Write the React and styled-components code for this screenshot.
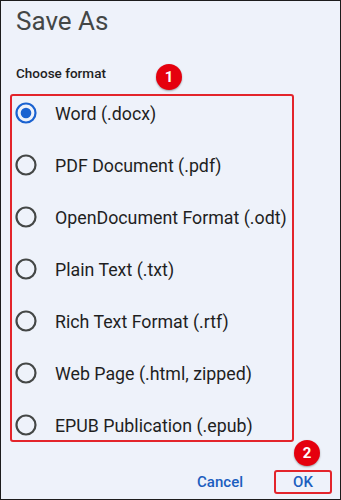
import React, { useState } from 'react'
import styled, { createGlobalStyle } from 'styled-components'

const GlobalStyle = createGlobalStyle`
  html, body {
    margin: 0;
    padding: 0;
    background: #eef2fa;
  }
  body {
    font-family: Roboto, "Liberation Sans", Arial, sans-serif;
  }
`

const Dialog = styled.div`
  position: relative;
  box-sizing: border-box;
  width: 341px;
  height: 500px;
  border: 1px solid #1c1c1c;
  background: #eef2fa;
  padding: 5px 8px 0 9px;
  display: flex;
  flex-direction: column;
`

const Title = styled.h1`
  margin: 0 0 0 6px;
  font-size: 26px;
  line-height: 30px;
  font-weight: 400;
  color: #444746;
`

const Label = styled.div`
  margin: 29px 0 0 6px;
  font-size: 13.5px;
  line-height: 16px;
  font-weight: 500;
  color: #1f1f1f;
`

const Highlight = styled.div`
  box-sizing: border-box;
  width: 284px;
  margin-top: 13px;
  border: 2px solid #e3242b;
  border-radius: 3px;
  padding: 2px 0 0 3px;
  display: flex;
  flex-direction: column;
  gap: 22px;
`

const Option = styled.label`
  display: flex;
  align-items: center;
  gap: 18px;
  height: 30px;
  font-size: 17.8px;
  color: #1f1f1f;
  cursor: pointer;
`

const RadioIcon = styled.svg`
  flex: none;
  width: 22px;
  height: 22px;
`

const Footer = styled.div`
  margin-top: auto;
  margin-bottom: 5px;
  display: flex;
  justify-content: flex-end;
  align-items: center;
  gap: 29px;
`

const TextButton = styled.button`
  box-sizing: border-box;
  background: none;
  border: 2px solid ${p => (p.$marked ? '#e3242b' : 'transparent')};
  border-radius: 3px;
  padding: 0;
  width: ${p => (p.$marked ? '58px' : 'auto')};
  height: 24px;
  font-family: inherit;
  font-size: 15px;
  font-weight: 500;
  color: #1b5ebf;
  cursor: pointer;
`

const Badge = styled.div`
  position: absolute;
  left: ${p => p.$x - 13}px;
  top: ${p => p.$y - 13}px;
  width: 26px;
  height: 26px;
  border-radius: 50%;
  background: #e5000e;
  box-shadow: 0 1px 2px rgba(0, 0, 0, 0.35);
  color: #fff;
  font-size: 15px;
  font-weight: 700;
  display: flex;
  align-items: center;
  justify-content: center;
`

const formats = [
  'Word (.docx)',
  'PDF Document (.pdf)',
  'OpenDocument Format (.odt)',
  'Plain Text (.txt)',
  'Rich Text Format (.rtf)',
  'Web Page (.html, zipped)',
  'EPUB Publication (.epub)',
]

function Radio({ checked }) {
  const color = checked ? '#1a62d0' : '#444746'
  return (
    <RadioIcon viewBox="0 0 22 22">
      <circle cx="11" cy="11" r="9.5" fill="none" stroke={color} strokeWidth="2.2" />
      {checked && <circle cx="11" cy="11" r="5.3" fill={color} />}
    </RadioIcon>
  )
}

export default function App() {
  const [selected, setSelected] = useState(0)

  return (
    <>
      <GlobalStyle />
      <Dialog>
        <Title>Save As</Title>
        <Label>Choose format</Label>
        <Highlight>
          {formats.map((name, i) => (
            <Option key={name} onClick={() => setSelected(i)}>
              <Radio checked={selected === i} />
              {name}
            </Option>
          ))}
        </Highlight>
        <Footer>
          <TextButton>Cancel</TextButton>
          <TextButton $marked>OK</TextButton>
        </Footer>
        <Badge $x={168} $y={76}>1</Badge>
        <Badge $x={306} $y={452}>2</Badge>
      </Dialog>
    </>
  )
}
